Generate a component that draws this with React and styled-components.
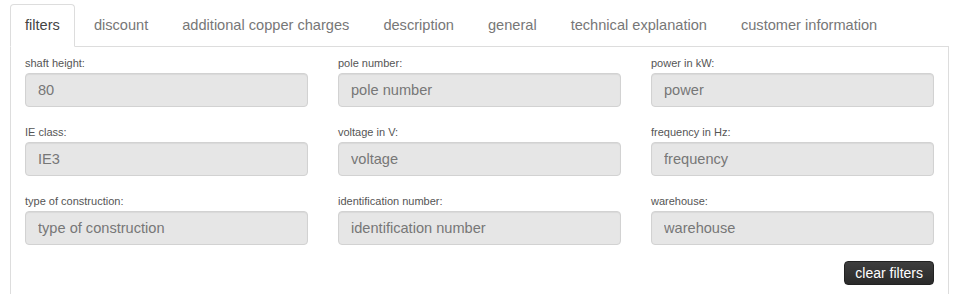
import React from "react";
import styled, { createGlobalStyle } from "styled-components";

const Global = createGlobalStyle`
  html, body { margin: 0; padding: 0; background: #fff; }
  body { font-family: "Liberation Sans", Arial, sans-serif; }
  * { box-sizing: border-box; }
`;

const Wrap = styled.div`
  padding: 4px 0 0 10px;
  width: 949px;
`;

const Tabs = styled.ul`
  display: flex;
  list-style: none;
  margin: 0;
  padding: 0;
  border-bottom: 1px solid #ddd;
`;

const Tab = styled.li`
  margin-right: 4px;
  margin-bottom: -1px;
  padding: 10px 14px;
  font-size: 14.6px;
  line-height: 21px;
  color: ${(p) => (p.$active ? "#444" : "#777")};
  background: ${(p) => (p.$active ? "#fff" : "transparent")};
  border: 1px solid ${(p) => (p.$active ? "#ddd" : "transparent")};
  border-bottom-color: ${(p) => (p.$active ? "#fff" : "transparent")};
  border-radius: 4px 4px 0 0;
  white-space: nowrap;
`;

const Panel = styled.div`
  border-left: 1px solid #ddd;
  border-right: 1px solid #ddd;
  padding: 9px 14px 10px 14px;
  height: 247px;
`;

const Grid = styled.div`
  display: grid;
  grid-template-columns: repeat(3, 1fr);
  column-gap: 30px;
  row-gap: 18px;
`;

const Field = styled.div`
  display: flex;
  flex-direction: column;
`;

const Label = styled.label`
  font-size: 11px;
  line-height: 15px;
  color: #555;
  margin-bottom: 2px;
`;

const Input = styled.input`
  height: 34px;
  padding: 0 12px;
  font-family: "Liberation Sans", Arial, sans-serif;
  font-size: 14.6px;
  color: #777;
  background: #e6e6e6;
  border: 1px solid #d2d2d2;
  border-radius: 4px;
  box-shadow: inset 0 1px 1px rgba(0, 0, 0, 0.06);
  outline: none;
  &::placeholder { color: #777; opacity: 1; }
`;

const Actions = styled.div`
  display: flex;
  justify-content: flex-end;
  margin-top: 16px;
`;

const Button = styled.button`
  height: 24px;
  padding: 0 10px;
  font-family: "Liberation Sans", Arial, sans-serif;
  font-size: 14px;
  color: #fff;
  background: linear-gradient(#3e3e3e, #2a2a2a);
  border: 1px solid #222;
  border-radius: 4px;
  line-height: 20px;
`;

const tabs = [
  "filters",
  "discount",
  "additional copper charges",
  "description",
  "general",
  "technical explanation",
  "customer information",
];

const fields = [
  ["shaft height:", "shaft height", "80"],
  ["pole number:", "pole number", ""],
  ["power in kW:", "power", ""],
  ["IE class:", "IE class", "IE3"],
  ["voltage in V:", "voltage", ""],
  ["frequency in Hz:", "frequency", ""],
  ["type of construction:", "type of construction", ""],
  ["identification number:", "identification number", ""],
  ["warehouse:", "warehouse", ""],
];

export default function App() {
  return (
    <>
      <Global />
      <Wrap>
        <Tabs>
          {tabs.map((t, i) => (
            <Tab key={t} $active={i === 0}>
              {t}
            </Tab>
          ))}
        </Tabs>
        <Panel>
          <Grid>
            {fields.map(([label, ph, val]) => (
              <Field key={label}>
                <Label>{label}</Label>
                <Input placeholder={ph} defaultValue={val} />
              </Field>
            ))}
          </Grid>
          <Actions>
            <Button>clear filters</Button>
          </Actions>
        </Panel>
      </Wrap>
    </>
  );
}
